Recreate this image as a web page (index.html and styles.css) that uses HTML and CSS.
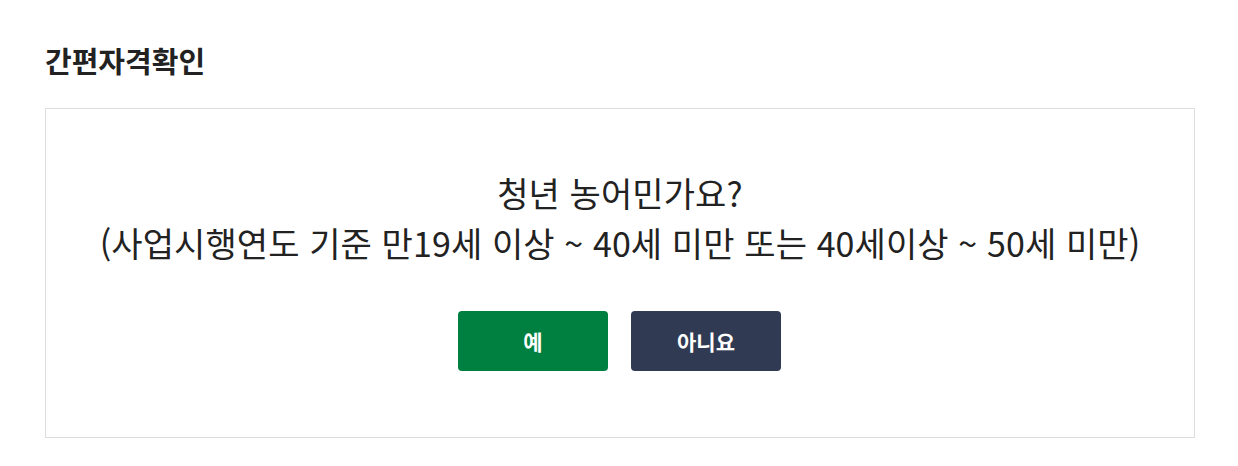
FILE: index.html
```html
<!DOCTYPE html>
<html lang="ko">
<head>
<meta charset="utf-8">
<link rel="stylesheet" href="styles.css">
</head>
<body>
<div class="page">
  <h2 class="title">간편자격확인</h2>
  <div class="card">
    <p class="question">청년 농어민가요?<br>(사업시행연도 기준 만19세 이상 ~ 40세 미만 또는 40세이상 ~ 50세 미만)</p>
    <div class="actions">
      <button class="btn btn-yes" type="button">예</button>
      <button class="btn btn-no" type="button">아니요</button>
    </div>
  </div>
</div>
</body>
</html>
```
FILE: styles.css
```css
html, body {
  margin: 0;
  padding: 0;
  background: #fff;
}
body {
  font-family: "Noto Sans CJK KR", "Noto Sans", sans-serif;
  color: #222;
}
.page {
  padding: 36px 44px 0 45px;
}
.title {
  margin: 0;
  font-size: 29px;
  font-weight: 700;
  line-height: 48px;
  color: #222;
}
.card {
  margin-top: 24px;
  width: 1150px;
  height: 330px;
  box-sizing: border-box;
  border: 1px solid #ddd;
  display: flex;
  flex-direction: column;
  align-items: center;
  padding-top: 59px;
}
.question {
  margin: 0;
  text-align: center;
  font-size: 34px;
  line-height: 50px;
  letter-spacing: 0.1px;
  color: #222;
}
.actions {
  margin-top: 43px;
  margin-left: -1px;
  display: flex;
  gap: 23px;
}
.btn {
  width: 150px;
  height: 60px;
  border: 0;
  border-radius: 4px;
  color: #fff;
  font-family: inherit;
  font-size: 21px;
  font-weight: 700;
  cursor: pointer;
}
.btn-yes { background: #008040; }
.btn-no { background: #303a52; }
```
